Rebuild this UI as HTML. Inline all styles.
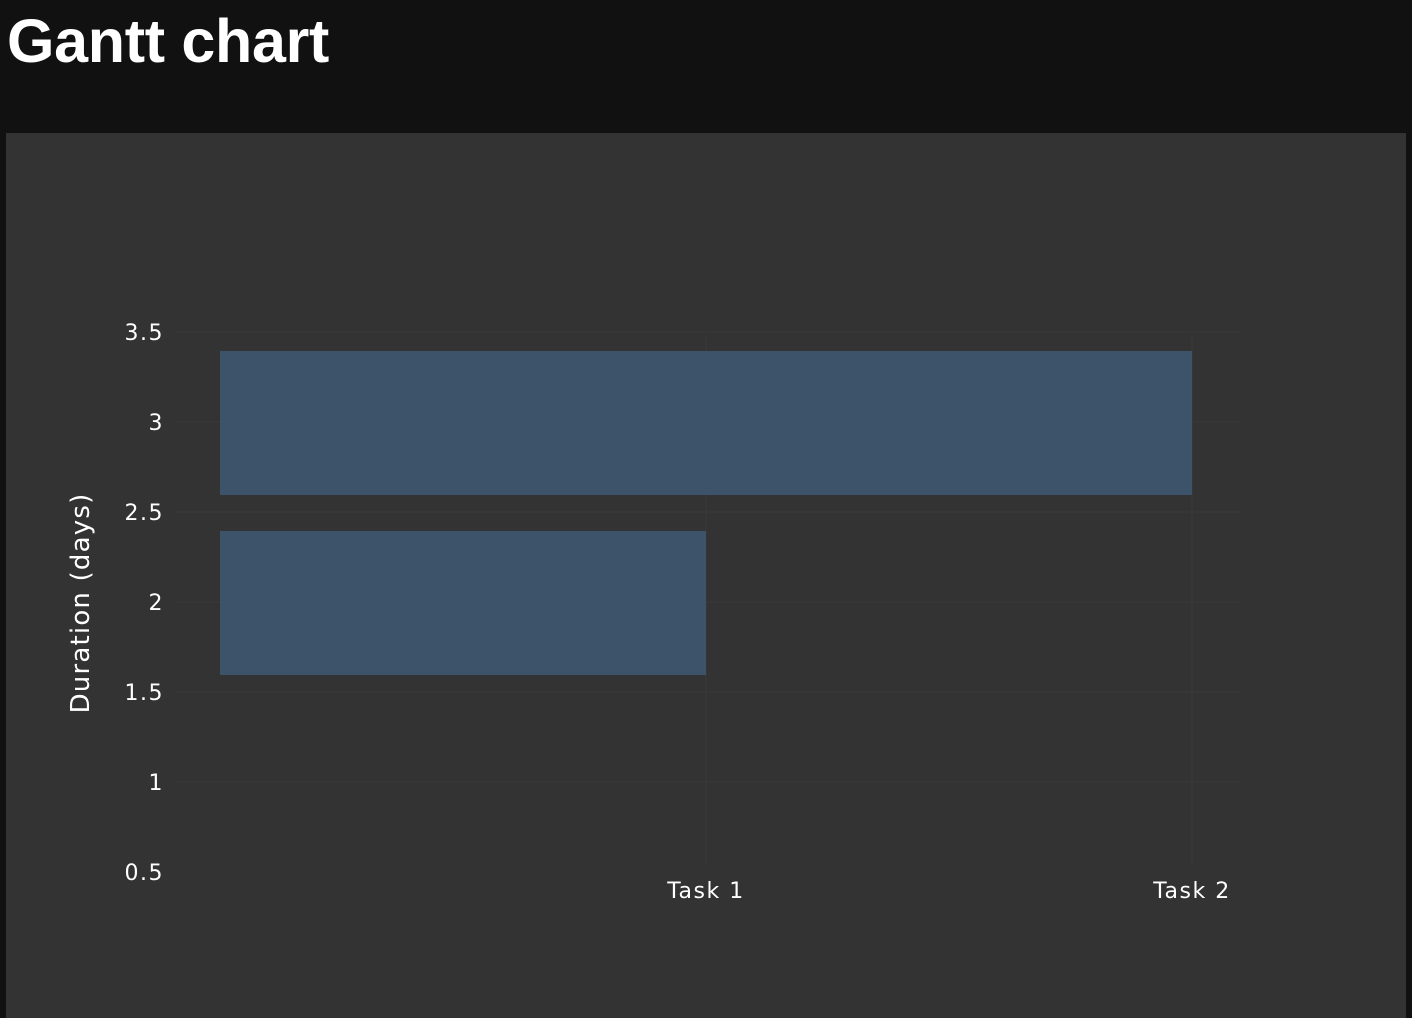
<!DOCTYPE html>
<html><head><meta charset="utf-8"><style>
html,body{margin:0;padding:0;background:#111;width:1412px;height:1018px;overflow:hidden}
h1{position:absolute;left:7px;top:6px;margin:0;font:bold 61px/70px "Liberation Sans",sans-serif;color:#fff;letter-spacing:-0.3px}
#p{position:absolute;left:6px;top:133px;width:1400px;height:885px;background:#333}
svg{position:absolute;left:0;top:0}
text{font-family:"DejaVu Sans",Verdana,sans-serif;fill:#fff}
</style></head><body>
<h1>Gantt chart</h1>
<div id="p"></div>
<svg width="1412" height="1018">
<g stroke="#3a3a3a" stroke-width="1">
<line x1="175" x2="1240" y1="332" y2="332"/>
<line x1="175" x2="1240" y1="422" y2="422"/>
<line x1="175" x2="1240" y1="512" y2="512"/>
<line x1="175" x2="1240" y1="602" y2="602"/>
<line x1="175" x2="1240" y1="692" y2="692"/>
<line x1="175" x2="1240" y1="782" y2="782"/>
<line x1="706" x2="706" y1="335" y2="865"/>
<line x1="1192" x2="1192" y1="335" y2="865"/>
</g>
<rect x="220" y="351" width="972" height="144" fill="#3d5369"/>
<rect x="220" y="531" width="486" height="144" fill="#3d5369"/>
<g font-size="22" text-anchor="end" letter-spacing="1.5">
<text x="164" y="340">3.5</text>
<text x="164" y="430">3</text>
<text x="164" y="520">2.5</text>
<text x="164" y="610">2</text>
<text x="164" y="700">1.5</text>
<text x="164" y="790">1</text>
<text x="164" y="880">0.5</text>
</g>
<g font-size="22" text-anchor="middle" letter-spacing="1.5">
<text x="706" y="898">Task 1</text>
<text x="1192" y="898">Task 2</text>
</g>
<text font-size="26" letter-spacing="1.2" text-anchor="middle" transform="translate(89,603) rotate(-90)">Duration (days)</text>
</svg>
</body></html>
